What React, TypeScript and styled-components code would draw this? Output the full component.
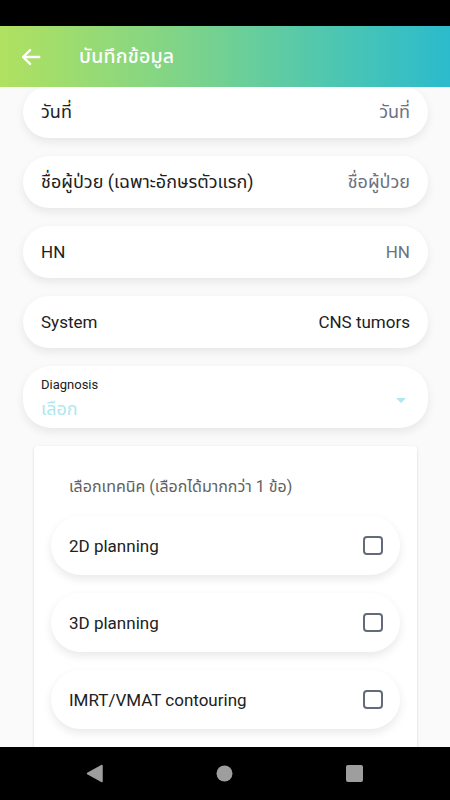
import React, { useLayoutEffect, useRef } from "react";
import styled, { createGlobalStyle } from "styled-components";

const GlobalStyle = createGlobalStyle`
  html, body { margin: 0; padding: 0; }
  body {
    font-family: Roboto, "Noto Sans", "Noto Sans Thai", "DejaVu Sans", sans-serif;
    background: #000;
  }
  * { box-sizing: border-box; }
`;

const Screen = styled.div`
  width: 450px;
  height: 800px;
  display: flex;
  flex-direction: column;
  background: #fafafa;
  overflow: hidden;
`;

const StatusBar = styled.div`
  height: 26px;
  flex: none;
  background: #000;
`;

const Header = styled.header`
  height: 61px;
  flex: none;
  display: flex;
  align-items: center;
  padding-left: 19px;
  gap: 37px;
  background: linear-gradient(90deg, #b0e160 0%, #7fd488 40%, #4cc6b2 75%, #2bbbcc 100%);
  position: relative;
  z-index: 2;
`;

const BackButton = styled.button`
  border: none;
  background: transparent;
  padding: 0;
  width: 23px;
  height: 23px;
  display: flex;
  align-items: center;
  justify-content: center;
  cursor: pointer;
`;

const Title = styled.h1`
  margin: 0;
  color: #fff;
  font-size: 19.5px;
  font-weight: 500;
  letter-spacing: 0.2px;
`;

const Scroll = styled.main`
  flex: 1;
  overflow-y: auto;
  scrollbar-width: none;
  &::-webkit-scrollbar { display: none; }
`;

const Content = styled.div`
  display: flex;
  flex-direction: column;
  gap: 18px;
  padding: 16px 22px 40px 23px;
`;

const FieldRow = styled.div`
  height: 52px;
  border-radius: 26px;
  background: #fff;
  box-shadow: 0 4px 10px rgba(0, 0, 0, 0.08);
  display: flex;
  align-items: center;
  justify-content: space-between;
  padding: 0 18px;
  font-size: 17px;
  color: #212121;
`;

const ThaiText = styled.span`
  font-size: 18px;
`;

const FieldValue = styled.span<{ $placeholder?: boolean }>`
  color: ${(p) => (p.$placeholder ? "#6b7280" : "#212121")};
`;

const SelectField = styled.div`
  height: 62px;
  border-radius: 28px;
  background: #fff;
  box-shadow: 0 4px 10px rgba(0, 0, 0, 0.08);
  display: flex;
  align-items: center;
  padding: 0 22px 0 18px;
`;

const SelectText = styled.div`
  flex: 1;
  display: flex;
  flex-direction: column;
  gap: 4px;
  padding-top: 6px;
`;

const SelectLabel = styled.span`
  font-size: 13px;
  color: #212121;
`;

const SelectPlaceholder = styled.span`
  font-size: 18px;
  color: #aee7ef;
`;

const Caret = styled.div`
  width: 0;
  height: 0;
  border-left: 5px solid transparent;
  border-right: 5px solid transparent;
  border-top: 5px solid #aee7ef;
  margin-top: 6px;
`;

const TechCard = styled.section`
  margin: 0 11px;
  background: #fff;
  border-radius: 4px;
  box-shadow: 0 1px 3px rgba(0, 0, 0, 0.12), 0 1px 2px rgba(0, 0, 0, 0.06);
  padding: 29px 17px 40px;
  display: flex;
  flex-direction: column;
  gap: 18px;
`;

const CardTitle = styled.div`
  padding-left: 18px;
  margin-bottom: -1px;
  font-size: 16px;
  color: #616161;
`;

const OptionRow = styled.label`
  height: 59px;
  border-radius: 29.5px;
  background: #fff;
  box-shadow: 0 4px 10px rgba(0, 0, 0, 0.09);
  display: flex;
  align-items: center;
  justify-content: space-between;
  padding: 0 17px 0 18px;
  font-size: 17px;
  color: #212121;
  cursor: pointer;
`;

const Checkbox = styled.span`
  width: 20px;
  height: 19px;
  border: 2px solid #636b7a;
  border-radius: 4px;
`;

const NavBar = styled.nav`
  height: 53px;
  flex: none;
  background: #000;
  display: flex;
  align-items: center;
  justify-content: space-between;
  padding: 0 87px 0 86px;
`;

const NavIcon = styled.svg`
  display: block;
`;

const fields: { label: string; value: string; placeholder: boolean; thai: boolean }[] = [
  { label: "วันที่", value: "วันที่", placeholder: true, thai: true },
  { label: "ชื่อผู้ป่วย (เฉพาะอักษรตัวแรก)", value: "ชื่อผู้ป่วย", placeholder: true, thai: true },
  { label: "HN", value: "HN", placeholder: true, thai: false },
  { label: "System", value: "CNS tumors", placeholder: false, thai: false },
];

const options = ["2D planning", "3D planning", "IMRT/VMAT contouring"];

export default function App() {
  const scrollRef = useRef<HTMLElement>(null);

  useLayoutEffect(() => {
    if (scrollRef.current) scrollRef.current.scrollTop = 17;
  }, []);

  return (
    <>
      <GlobalStyle />
      <Screen>
        <StatusBar />
        <Header>
          <BackButton aria-label="back">
            <svg width="22" height="22" viewBox="0 0 24 24" fill="none" stroke="#fff" strokeWidth="2.6" strokeLinecap="round" strokeLinejoin="round">
              <path d="M21 12H3.5" />
              <path d="M11 4.5L3.5 12l7.5 7.5" />
            </svg>
          </BackButton>
          <Title>บันทึกข้อมูล</Title>
        </Header>
        <Scroll ref={scrollRef}>
          <Content>
            {fields.map((f) =>
              f.thai ? (
                <FieldRow key={f.label}>
                  <ThaiText>{f.label}</ThaiText>
                  <FieldValue $placeholder={f.placeholder}>
                    <ThaiText>{f.value}</ThaiText>
                  </FieldValue>
                </FieldRow>
              ) : (
                <FieldRow key={f.label}>
                  <span>{f.label}</span>
                  <FieldValue $placeholder={f.placeholder}>{f.value}</FieldValue>
                </FieldRow>
              )
            )}
            <SelectField>
              <SelectText>
                <SelectLabel>Diagnosis</SelectLabel>
                <SelectPlaceholder>เลือก</SelectPlaceholder>
              </SelectText>
              <Caret />
            </SelectField>
            <TechCard>
              <CardTitle>เลือกเทคนิค (เลือกได้มากกว่า 1 ข้อ)</CardTitle>
              {options.map((o) => (
                <OptionRow key={o}>
                  <span>{o}</span>
                  <Checkbox />
                </OptionRow>
              ))}
            </TechCard>
          </Content>
        </Scroll>
        <NavBar>
          <NavIcon width="17" height="19" viewBox="0 0 17 19" aria-hidden="true">
            <path d="M16 1.5v16L1.5 9.5z" fill="#9e9e9e" stroke="#9e9e9e" strokeWidth="1.5" strokeLinejoin="round" />
          </NavIcon>
          <NavIcon width="17" height="17" viewBox="0 0 17 17" aria-hidden="true">
            <circle cx="8.5" cy="8.5" r="8" fill="#9e9e9e" />
          </NavIcon>
          <NavIcon width="17" height="17" viewBox="0 0 17 17" aria-hidden="true">
            <rect x="0" y="0" width="17" height="17" rx="2" fill="#9e9e9e" />
          </NavIcon>
        </NavBar>
      </Screen>
    </>
  );
}
